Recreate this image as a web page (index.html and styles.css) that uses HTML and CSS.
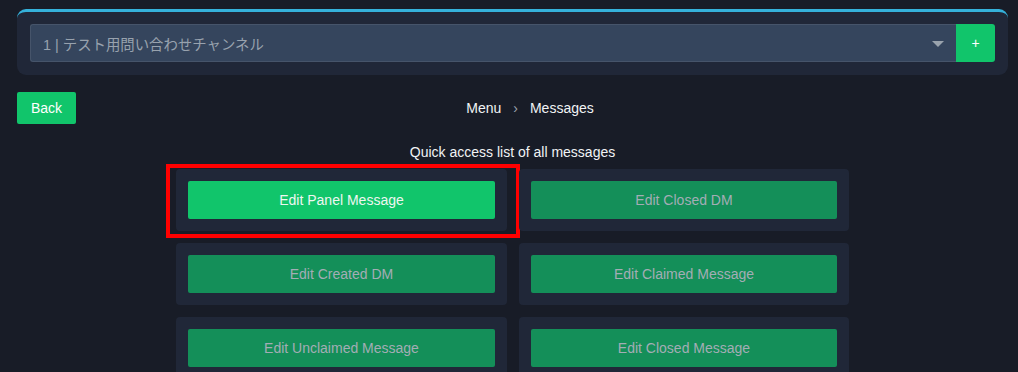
FILE: index.html
```html
<!DOCTYPE html>
<html lang="ja">
<head>
<meta charset="utf-8">
<link rel="stylesheet" href="styles.css">
</head>
<body>
<div class="page">
  <div class="top-card">
    <div class="select-row">
      <div class="select">
        <span class="select-text">1 | テスト用問い合わせチャンネル</span>
        <span class="caret"></span>
      </div>
      <button class="add-btn">+</button>
    </div>
  </div>

  <div class="nav-row">
    <button class="back-btn">Back</button>
    <div class="breadcrumb">
      <span>Menu</span>
      <span class="chev">›</span>
      <span>Messages</span>
    </div>
  </div>

  <div class="subtitle">Quick access list of all messages</div>

  <div class="grid">
    <div class="cell highlighted">
      <button class="msg-btn active">Edit Panel Message</button>
      <div class="annotation"></div>
    </div>
    <div class="cell"><button class="msg-btn">Edit Closed DM</button></div>
    <div class="cell"><button class="msg-btn">Edit Created DM</button></div>
    <div class="cell"><button class="msg-btn">Edit Claimed Message</button></div>
    <div class="cell"><button class="msg-btn">Edit Unclaimed Message</button></div>
    <div class="cell"><button class="msg-btn">Edit Closed Message</button></div>
  </div>
</div>
</body>
</html>
```

FILE: styles.css
```css
html, body {
  margin: 0;
  padding: 0;
  background: #181c27;
  font-family: "Liberation Sans", Arial, "Noto Sans CJK JP", sans-serif;
  font-size: 14px;
  color: #e5e7eb;
  overflow: hidden;
}

.page {
  padding: 9px 10px 0 17px;
}

.top-card {
  background: #202738;
  border-top: 3px solid #35b1da;
  border-radius: 9px;
  padding: 12px 13px 13px 13px;
}

.select-row {
  display: flex;
  height: 38px;
}

.select {
  flex: 1;
  display: flex;
  align-items: center;
  justify-content: space-between;
  background: #35455d;
  border: 1px solid #46546a;
  border-right: none;
  border-radius: 3px 0 0 3px;
  padding: 0 12px 0 12px;
}

.select-text {
  font-family: "Liberation Sans", "Noto Sans CJK JP", sans-serif;
  font-size: 14.4px;
  color: #98a2ae;
}

.caret {
  width: 0;
  height: 0;
  border-left: 6px solid transparent;
  border-right: 6px solid transparent;
  border-top: 6px solid #9aa3ad;
  margin-top: 1px;
}

.add-btn {
  width: 39px;
  border: none;
  background: #11c56b;
  color: #ffffff;
  font-family: "Liberation Sans", sans-serif;
  font-size: 14px;
  border-radius: 0 3px 3px 0;
  padding: 0;
}

.nav-row {
  display: flex;
  align-items: center;
  margin-top: 17px;
  height: 32px;
}

.back-btn {
  width: 59px;
  height: 32px;
  border: none;
  border-radius: 2px;
  background: #11c56b;
  color: #ffffff;
  font-family: "Liberation Sans", sans-serif;
  font-size: 14px;
  padding: 0;
}

.breadcrumb {
  flex: 1;
  display: flex;
  justify-content: center;
  align-items: center;
  gap: 10px;
  padding-right: 24px;
  color: #f1f3f5;
  font-size: 14px;
}

.chev {
  color: #9aa3ad;
  font-size: 14px;
  margin: 0 2px;
}

.subtitle {
  text-align: center;
  margin-top: 18px;
  line-height: 20px;
  color: #f1f3f5;
}

.grid {
  display: grid;
  grid-template-columns: 331px 330px;
  gap: 12px;
  justify-content: center;
  margin-top: 7px;
}

.cell {
  position: relative;
  background: #202738;
  border-radius: 4px;
  padding: 12px;
}

.msg-btn {
  display: block;
  width: 100%;
  height: 38px;
  border: none;
  border-radius: 2px;
  background: #148f59;
  color: #a3adb5;
  font-family: "Liberation Sans", sans-serif;
  font-size: 14px;
  padding: 0;
}

.msg-btn.active {
  background: #11c56b;
  color: #eef6f1;
}

.annotation {
  position: absolute;
  left: -10px;
  top: -5px;
  right: -13px;
  bottom: -7px;
  border: 4px solid #ff0000;
  pointer-events: none;
}
```
